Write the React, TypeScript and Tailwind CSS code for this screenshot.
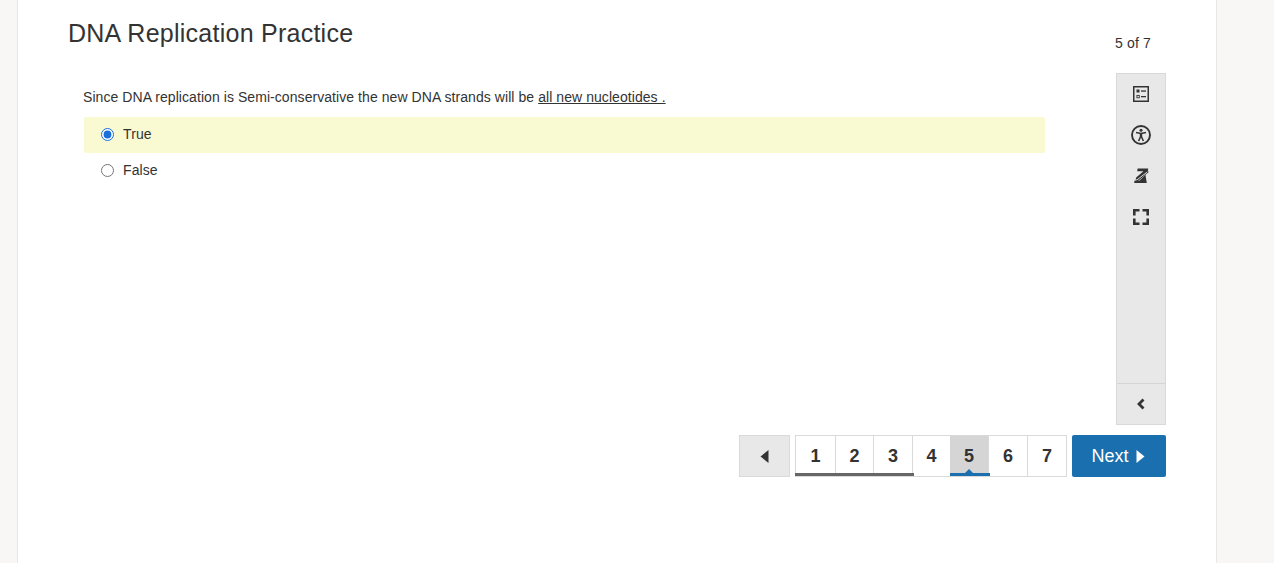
const font = { fontFamily: '"Liberation Sans", Arial, sans-serif' };

function ListIcon() {
  return (
    <svg width="16" height="16" viewBox="0 0 16 16" fill="none">
      <rect x="0.75" y="0.75" width="14.5" height="14.5" stroke="#333" strokeWidth="1.5" />
      <rect x="3.5" y="3.5" width="3" height="3" fill="#333" />
      <rect x="8" y="4.4" width="5" height="1.3" fill="#333" />
      <rect x="3.9" y="9.4" width="2.4" height="2.4" stroke="#333" strokeWidth="0.9" />
      <rect x="8" y="10" width="5" height="1.3" fill="#333" />
    </svg>
  );
}

function AccessIcon() {
  return (
    <svg width="20" height="20" viewBox="0 0 20 20" fill="none">
      <circle cx="10" cy="10" r="9" stroke="#333" strokeWidth="1.9" />
      <circle cx="10" cy="5.2" r="1.5" fill="#333" />
      <path d="M5 7.6L10 8.6L15 7.6" stroke="#333" strokeWidth="1.5" />
      <path d="M10 8.4V11.6" stroke="#333" strokeWidth="2.4" />
      <path d="M9.9 11L7.6 16M10.1 11L12.4 16" stroke="#333" strokeWidth="1.6" />
    </svg>
  );
}

function ClearIcon() {
  return (
    <svg width="15" height="16" viewBox="0 0 15 16" fill="none">
      <path d="M3.6 0.5H14.2L13.8 3.4L5.4 11.6H1.6L2.2 9.6L9.4 3.2H3.2Z" fill="#333" />
      <path d="M0.6 12.4H5.6L11.4 6.8L12.8 15H0.2Z" fill="#333" />
      <path d="M1 14.6L14.4 3.6" stroke="#333" strokeWidth="1.2" />
      <path d="M3 11.8L13 4.2" stroke="#e8e8e8" strokeWidth="0.9" />
    </svg>
  );
}

function ExpandIcon() {
  return (
    <svg width="16" height="16" viewBox="0 0 16 16" fill="none">
      <path d="M1.3 6.5V1.3H6.5M9.5 1.3H14.7V6.5M14.7 9.5V14.7H9.5M6.5 14.7H1.3V9.5" stroke="#333" strokeWidth="2.6" />
    </svg>
  );
}

function ToolButton({ children }: { children: React.ReactNode }) {
  return <div className="h-[41px] flex items-center justify-center">{children}</div>;
}

export default function App() {
  const pages = ['1', '2', '3', '4', '5', '6', '7'];
  const widths = ['w-[40px]', 'w-[38px]', 'w-[39px]', 'w-[37px]', 'w-[39px]', 'w-[39px]', 'w-[38px]'];

  return (
    <div style={font} className="h-screen overflow-hidden bg-[#f8f7f5] pl-[17px] text-[#333]">
      <div className="w-[1200px] h-full bg-white border-x border-[#e8e8e8] pl-[50px] pr-[50px]">
        <div className="flex justify-between h-[73px]">
          <h1 className="text-[25px] leading-[30px] pt-[18px] tracking-[0.25px] font-normal">DNA Replication Practice</h1>
          <div className="text-[14px] leading-[16px] pt-[35px] pr-[15px] tracking-[0.15px]">5 of 7</div>
        </div>

        <div className="flex justify-between h-[352px]">
          <div className="w-[977px] pl-[16px] pt-[16px] text-[14px]">
            <p className="leading-[16px] h-[28px] -ml-px tracking-[0.065px]">
              Since DNA replication is Semi-conservative the new DNA strands will be <u>all new nucleotides .</u>
            </p>
            <label className="h-[36px] flex items-center pl-[17px] gap-[9px] bg-[#fafad2] rounded-[2px]">
              <input type="radio" name="a" defaultChecked className="m-0 w-[13px] h-[13px] -mt-[2px] accent-[#1a6fd8]" />
              <span className="tracking-[0.1px] -mt-[2px]">True</span>
            </label>
            <label className="h-[36px] flex items-center pl-[17px] gap-[9px]">
              <input type="radio" name="a" className="m-0 w-[13px] h-[13px] -mt-[2px]" />
              <span className="tracking-[0.1px] -mt-[2px]">False</span>
            </label>
          </div>

          <div className="w-[50px] bg-[#e8e8e8] border border-[#d9d9d9] flex flex-col justify-between">
            <div className="-mt-px">
              <ToolButton><ListIcon /></ToolButton>
              <ToolButton><AccessIcon /></ToolButton>
              <ToolButton><ClearIcon /></ToolButton>
              <ToolButton><ExpandIcon /></ToolButton>
            </div>
            <div className="h-[41px] border-t border-[#d5d5d5] flex items-center justify-center">
              <svg width="10" height="12" viewBox="0 0 10 12" fill="none">
                <path d="M7.5 1.5L3 6L7.5 10.5" stroke="#333" strokeWidth="2.8" />
              </svg>
            </div>
          </div>
        </div>

        <div className="flex justify-end pt-[10px]">
          <button className="w-[51px] h-[42px] bg-[#e8e8e8] border border-[#d9d9d9] flex items-center justify-center mr-[5px]">
            <svg width="9" height="13" viewBox="0 0 9 13"><path d="M8.5 0V13L0.5 6.5Z" fill="#333" /></svg>
          </button>
          <div className="flex h-[42px] border border-[#d9d9d9] mr-[5px] relative">
            {pages.map((p, i) => (
              <div
                key={p}
                className={`${widths[i]} flex items-center justify-center text-[18px] font-bold ${i < 6 && i !== 3 ? 'border-r border-[#d9d9d9]' : ''} ${p === '5' ? 'bg-[#d5d5d5]' : ''}`}
              >
                {p}
              </div>
            ))}
            <span className="absolute bottom-0 -left-px w-[119px] h-[3px] bg-[#666]" />
            <span className="absolute bottom-0 left-[154px] w-[40px] h-[3px] bg-[#1a6fae]" />
            <span className="absolute bottom-[3px] left-[169px] w-0 h-0 border-x-[4px] border-x-transparent border-b-[4px] border-b-[#1a6fae]" />
          </div>
          <button className="w-[94px] h-[42px] bg-[#1a6fae] rounded-[2px] text-white text-[18px] flex items-center justify-center gap-[7px] pr-[2px]">
            Next
            <svg width="9" height="13" viewBox="0 0 9 13"><path d="M0.5 0V13L8.5 6.5Z" fill="#fff" /></svg>
          </button>
        </div>
      </div>
    </div>
  );
}
